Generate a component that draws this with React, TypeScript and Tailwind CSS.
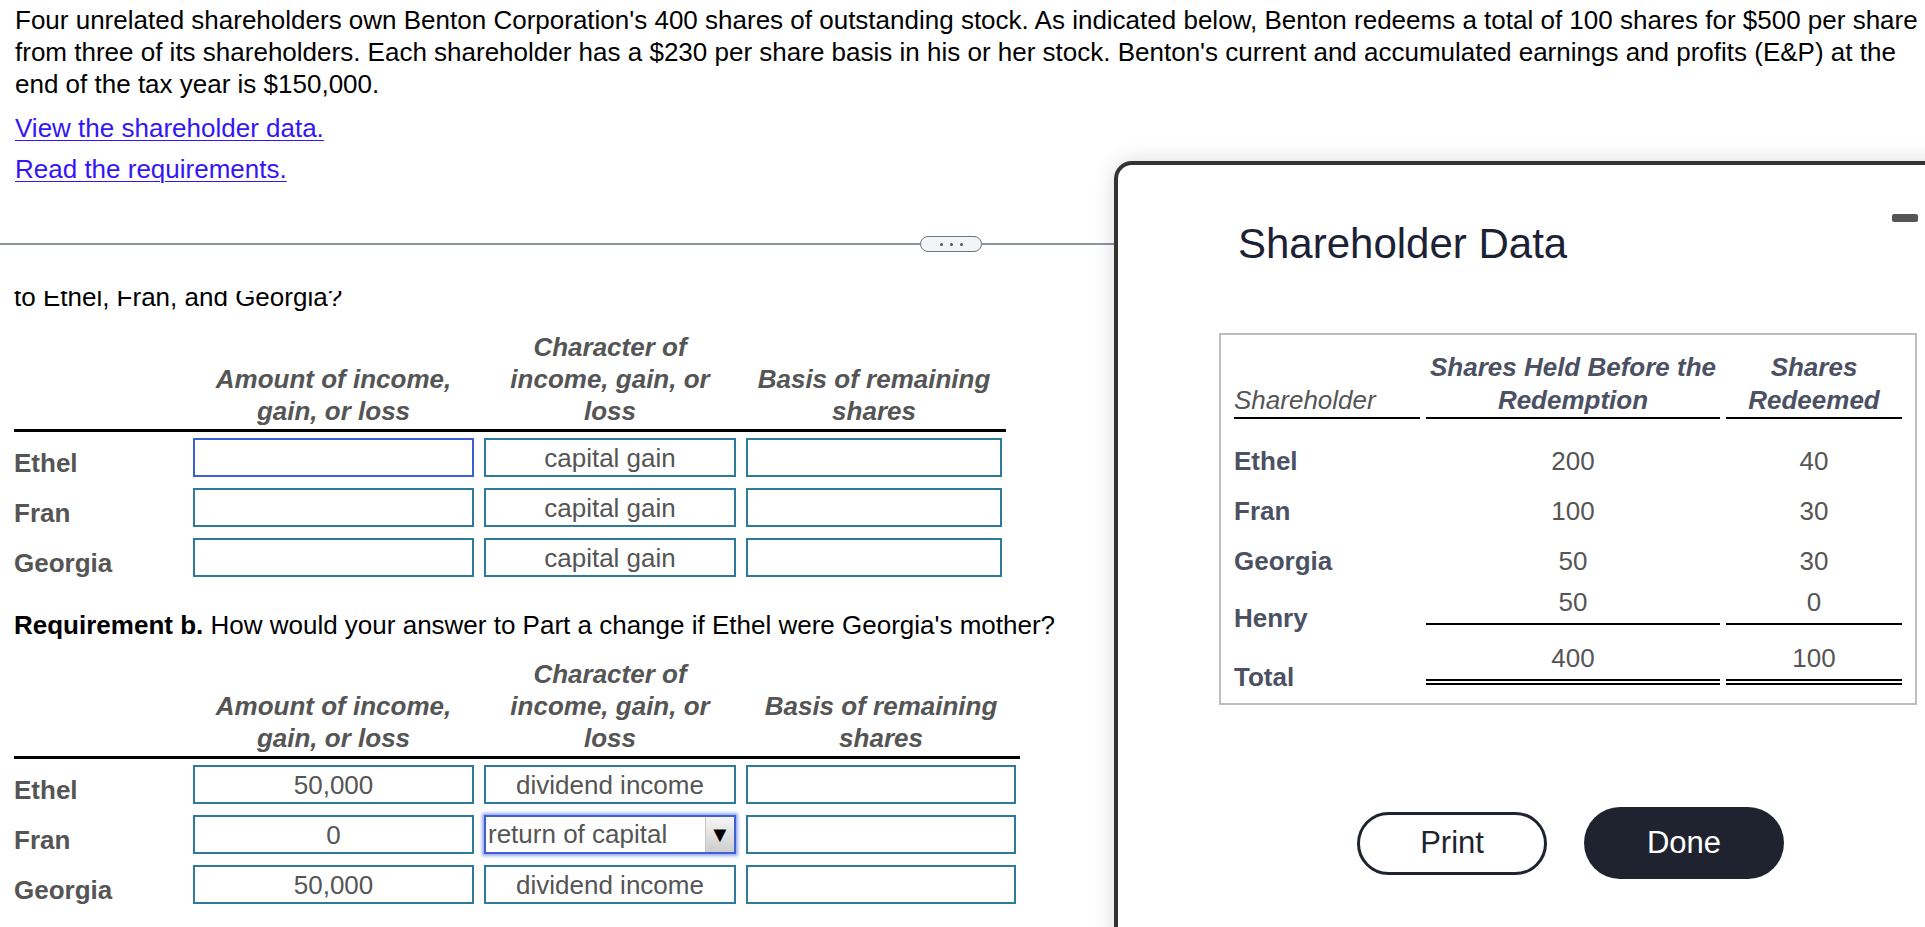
import React from "react";

type Row = {
  name: string;
  amount: string;
  character: string;
  basis: string;
  select?: boolean;
  active?: boolean;
};

const partA: Row[] = [
  { name: "Ethel", amount: "", character: "capital gain", basis: "", active: true },
  { name: "Fran", amount: "", character: "capital gain", basis: "" },
  { name: "Georgia", amount: "", character: "capital gain", basis: "" },
];

const partB: Row[] = [
  { name: "Ethel", amount: "50,000", character: "dividend income", basis: "" },
  { name: "Fran", amount: "0", character: "return of capital", basis: "", select: true },
  { name: "Georgia", amount: "50,000", character: "dividend income", basis: "" },
];

const holders = [
  { name: "Ethel", before: "200", redeemed: "40" },
  { name: "Fran", before: "100", redeemed: "30" },
  { name: "Georgia", before: "50", redeemed: "30" },
];

function Cell({ value, active }: { value: string; active?: boolean }) {
  return (
    <div
      className={`flex h-[39px] items-center justify-center border-2 bg-white text-[#555] ${
        active ? "border-[#3c5fd4]" : "border-[#2e7a9a]"
      }`}
    >
      {value}
    </div>
  );
}

function Dropdown({ value }: { value: string }) {
  return (
    <div className="flex h-[39px] items-stretch border-2 border-[#3f5fd6] bg-white shadow-[0_0_3px_2px_rgba(70,100,220,0.55)]">
      <span className="flex-1 pl-[2px] text-left leading-[35px] text-[#555]">{value}</span>
      <span className="flex w-[29px] items-center justify-center border-l border-[#c8c8c8] bg-gradient-to-b from-[#f6f6f6] to-[#cdcdcd] text-[22px] text-black">
        ▼
      </span>
    </div>
  );
}

function AnswerTable({ rows, cols, width }: { rows: Row[]; cols: string; width: string }) {
  return (
    <div>
      <div className={`${width} border-b-[3px] border-black pb-[2px]`}>
        <div className={`grid ${cols} items-end gap-x-[10px] text-center font-bold italic leading-[32px] text-[#555]`}>
          <div />
          <div>
            Amount of income,
            <br />
            gain, or loss
          </div>
          <div>
            Character of
            <br />
            income, gain, or
            <br />
            loss
          </div>
          <div>
            Basis of remaining
            <br />
            shares
          </div>
        </div>
      </div>
      <div className="mt-[6px] flex flex-col gap-[11px]">
        {rows.map((r) => (
          <div key={r.name} className={`grid ${cols} gap-x-[10px]`}>
            <div className="pt-[11px] font-bold leading-[28px] text-[#555]">{r.name}</div>
            <Cell value={r.amount} active={r.active} />
            {r.select ? <Dropdown value={r.character} /> : <Cell value={r.character} />}
            <Cell value={r.basis} />
          </div>
        ))}
      </div>
    </div>
  );
}

function ShareholderData() {
  return (
    <div className="absolute left-[1114px] top-[161px] h-[900px] w-[1000px] rounded-tl-[18px] border-4 border-[#333] bg-white pl-[101px] pt-[55px] shadow-[0_0_22px_rgba(0,0,0,0.14)]">
      <div className="absolute left-[774px] top-[49px] h-[8px] w-[26px] rounded-[2px] bg-[#555]" />
      <h2 className="pl-[19px] text-[42px] leading-[48px] text-[#1c2135]">Shareholder Data</h2>

      <div className="mt-[65px] w-[698px] border-2 border-[#bdbdbd] pl-[13px] pr-[12px] pt-[16px] text-[#4b5163]">
        <div className="grid grid-cols-[186px_294px_176px] items-end gap-x-[6px] leading-[33px]">
          <div className="border-b-2 border-black italic text-[#555]">Shareholder</div>
          <div className="border-b-2 border-black text-center font-bold italic">
            Shares Held Before the
            <br />
            Redemption
          </div>
          <div className="border-b-2 border-black text-center font-bold italic">
            Shares
            <br />
            Redeemed
          </div>
        </div>

        <div className="mt-[17px]">
          {holders.map((h) => (
            <div key={h.name} className="grid h-[50px] grid-cols-[186px_294px_176px] items-center gap-x-[6px] leading-[33px]">
              <div className="font-bold">{h.name}</div>
              <div className="text-center text-[#555]">{h.before}</div>
              <div className="text-center text-[#555]">{h.redeemed}</div>
            </div>
          ))}
          <div className="grid h-[56px] grid-cols-[186px_294px_176px] gap-x-[6px] leading-[33px]">
            <div className="self-end pb-[7px] font-bold">Henry</div>
            <div className="self-start border-b-2 border-black pb-[4px] text-center text-[#555]">50</div>
            <div className="self-start border-b-2 border-black pb-[4px] text-center text-[#555]">0</div>
          </div>
          <div className="grid h-[61px] grid-cols-[186px_294px_176px] gap-x-[6px] leading-[33px]">
            <div className="self-end pb-[9px] font-bold">Total</div>
            <div className="self-start border-b-[6px] border-double border-black pb-[4px] text-center text-[#555]">400</div>
            <div className="self-start border-b-[6px] border-double border-black pb-[4px] text-center text-[#555]">100</div>
          </div>
        </div>
      </div>

      <div className="mt-[102px] flex w-[698px] items-center justify-center gap-[37px] pl-[5px]">
        <button className="h-[63px] w-[190px] rounded-full border-[3px] border-[#1f2330] bg-white text-[31px] text-[#1f2330]">
          Print
        </button>
        <button className="h-[72px] w-[200px] rounded-full bg-[#1f2330] text-[31px] text-white">Done</button>
      </div>
    </div>
  );
}

export default function App() {
  return (
    <div className="relative h-[927px] w-[1925px] overflow-hidden bg-white font-['Liberation_Sans',Arial,sans-serif] text-[26px] text-black">
      <div className="pl-[15px] pt-[4px] leading-[32px]">
        <p className="whitespace-nowrap">
          Four unrelated shareholders own Benton Corporation's 400 shares of outstanding stock. As indicated below, Benton redeems a total of 100 shares for $500 per share
          <br />
          from three of its shareholders. Each shareholder has a $230 per share basis in his or her stock. Benton's current and accumulated earnings and profits (E&amp;P) at the
          <br />
          end of the tax year is $150,000.
        </p>
        <p className="mt-[12px]">
          <a href="#" className="text-[#3415f5] underline decoration-1 underline-offset-[3px]">
            View the shareholder data.
          </a>
        </p>
        <p className="mt-[9px]">
          <a href="#" className="text-[#3415f5] underline decoration-1 underline-offset-[3px]">
            Read the requirements.
          </a>
        </p>
      </div>

      <div className="mt-[51px] flex h-[16px] w-[1120px] items-center">
        <div className="h-[2px] w-[920px] bg-[#8e93a5]" />
        <div className="flex h-[16px] w-[62px] items-center justify-center gap-[7px] rounded-full border-[1.5px] border-[#6b7384] bg-[#f3f4f6]">
          <span className="h-[3px] w-[3px] rounded-full bg-[#555]" />
          <span className="h-[3px] w-[3px] rounded-full bg-[#555]" />
          <span className="h-[3px] w-[3px] rounded-full bg-[#555]" />
        </div>
        <div className="h-[2px] flex-1 bg-[#8e93a5]" />
      </div>

      <div className="mt-[39px] h-[636px] overflow-hidden pl-[14px] leading-[32px]">
        <p className="-mt-[10px]">to Ethel, Fran, and Georgia?</p>

        <div className="mt-[18px]">
          <AnswerTable rows={partA} cols="grid-cols-[169px_281px_252px_256px]" width="w-[992px]" />
        </div>

        <p className="mt-[32px]">
          <span className="font-bold">Requirement b.</span> How would your answer to Part a change if Ethel were Georgia's mother?
        </p>

        <div className="mt-[17px]">
          <AnswerTable rows={partB} cols="grid-cols-[169px_281px_252px_270px]" width="w-[1006px]" />
        </div>
      </div>

      <ShareholderData />
    </div>
  );
}
